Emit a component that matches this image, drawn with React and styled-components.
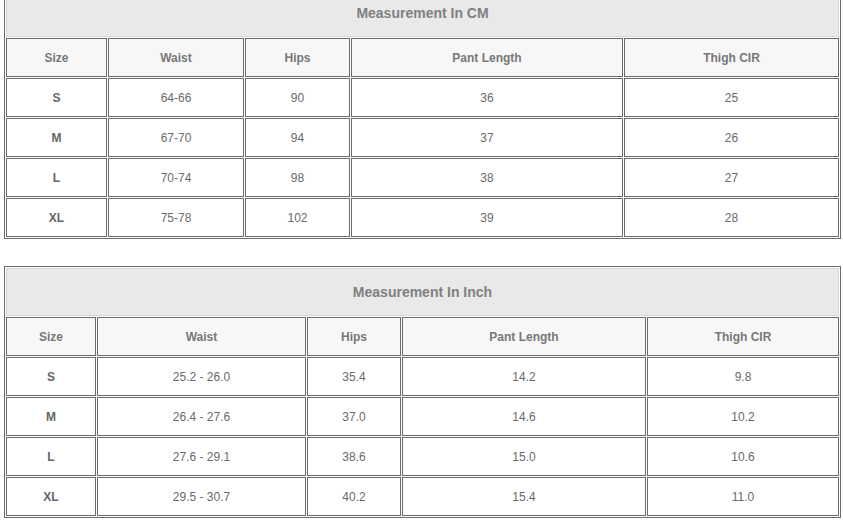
import React from "react";
import styled, { createGlobalStyle } from "styled-components";

const GlobalStyle = createGlobalStyle`
  html, body {
    margin: 0;
    padding: 0;
    background: #ffffff;
    overflow: hidden;
  }
  body {
    font-family: "Liberation Sans", Arial, sans-serif;
  }
`;

const Page = styled.div`
  display: flex;
  flex-direction: column;
  gap: 27px;
  padding: 0 3px 0 4px;
  margin-top: -13px;
`;

const Table = styled.table`
  width: 837px;
  table-layout: fixed;
  border-collapse: separate;
  border-spacing: 1px;
  border: 1px solid #6b6b6b;
  font-family: "Liberation Sans", Arial, sans-serif;
  font-size: 12px;
  color: #555;
`;

const Title = styled.th`
  height: 48px;
  box-sizing: border-box;
  background: #e9e9e9;
  border: 1px solid #d6d6d6;
  font-size: 14px;
  font-weight: bold;
  color: #808080;
  text-align: center;
  vertical-align: middle;
  padding: 0;
`;

const HeadCell = styled.th`
  height: 39px;
  box-sizing: border-box;
  background: #f7f7f7;
  border: 1px solid #6b6b6b;
  font-weight: bold;
  color: #777;
  text-align: center;
  vertical-align: middle;
  padding: 0;
`;

const Cell = styled.td`
  height: 39px;
  box-sizing: border-box;
  background: #fff;
  border: 1px solid #6b6b6b;
  text-align: center;
  vertical-align: middle;
  padding: 0;
  font-weight: ${(p) => (p.$bold ? "bold" : "normal")};
  color: ${(p) => (p.$bold ? "#666" : "#6a6a6a")};
`;

const headers = ["Size", "Waist", "Hips", "Pant Length", "Thigh CIR"];

const cmRows = [
  ["S", "64-66", "90", "36", "25"],
  ["M", "67-70", "94", "37", "26"],
  ["L", "70-74", "98", "38", "27"],
  ["XL", "75-78", "102", "39", "28"],
];

const inchRows = [
  ["S", "25.2 - 26.0", "35.4", "14.2", "9.8"],
  ["M", "26.4 - 27.6", "37.0", "14.6", "10.2"],
  ["L", "27.6 - 29.1", "38.6", "15.0", "10.6"],
  ["XL", "29.5 - 30.7", "40.2", "15.4", "11.0"],
];

function SizeTable({ title, widths, rows }) {
  return (
    <Table>
      <colgroup>
        {widths.map((w, i) => (
          <col key={i} style={{ width: w }} />
        ))}
      </colgroup>
      <thead>
        <tr>
          <Title colSpan={5}>{title}</Title>
        </tr>
        <tr>
          {headers.map((h) => (
            <HeadCell key={h}>{h}</HeadCell>
          ))}
        </tr>
      </thead>
      <tbody>
        {rows.map((r) => (
          <tr key={r[0]}>
            {r.map((v, i) => (
              <Cell key={i} $bold={i === 0}>
                {v}
              </Cell>
            ))}
          </tr>
        ))}
      </tbody>
    </Table>
  );
}

export default function App() {
  return (
    <>
      <GlobalStyle />
      <Page>
        <SizeTable
          title="Measurement In CM"
          widths={[101, 136, 105, 272, 215]}
          rows={cmRows}
        />
        <SizeTable
          title="Measurement In Inch"
          widths={[90, 209, 94, 244, 192]}
          rows={inchRows}
        />
      </Page>
    </>
  );
}
